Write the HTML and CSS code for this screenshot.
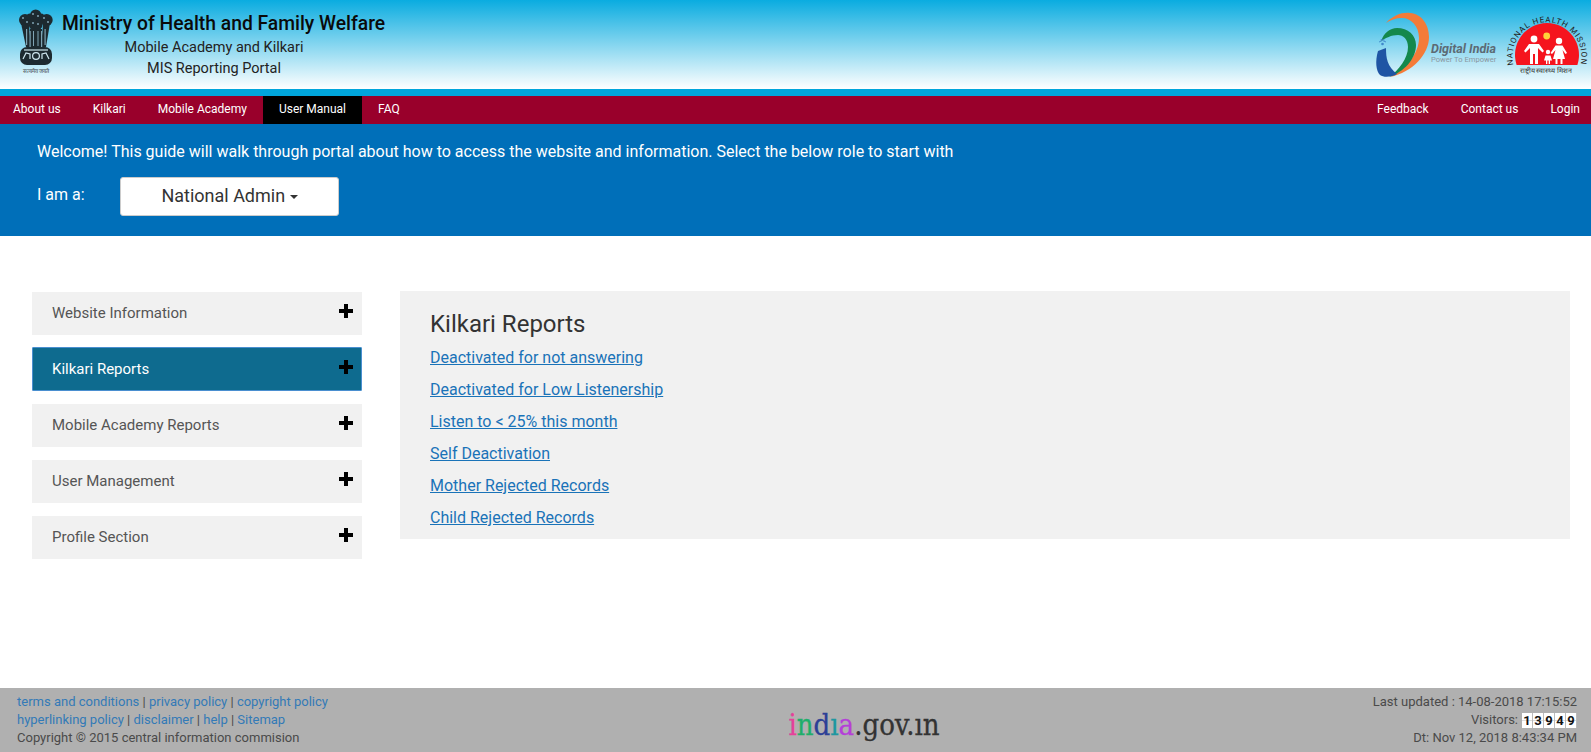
FILE: index.html
```html
<!DOCTYPE html>
<html lang="en">
<head>
  <meta charset="UTF-8" />
  <meta name="viewport" content="width=device-width, initial-scale=1.0"/>
  <title>Mobile Academy and Kilkari - MIS Reporting Portal</title>
  <link rel="stylesheet" href="styles.css">
</head>
<body>
  <header class="banner">
    <div class="brand">
      <svg class="emblem" viewBox="0 0 38 66" width="38" height="66">
        <g fill="#1d2a30">
          <circle cx="18.7" cy="6" r="5.5"/>
          <circle cx="8" cy="11" r="6"/>
          <circle cx="29.7" cy="11" r="6"/>
          <circle cx="13" cy="8" r="3.5"/>
          <circle cx="24" cy="8" r="3.5"/>
          <ellipse cx="18.7" cy="15" rx="7" ry="7"/>
          <path d="M4 14 L12 16 L14 38 L9 38 Z"/>
          <path d="M33 14 L26 16 L24 38 L29 38 Z"/>
          <path d="M13 20 H25 L25 38 H13 Z"/>
          <rect x="3" y="38" width="32" height="18" rx="7"/>
        </g>
        <g fill="#7fa3b3">
          <rect x="9" y="20" width="1.2" height="16"/>
          <rect x="12.5" y="22" width="1.2" height="16"/>
          <rect x="16" y="22" width="1" height="15"/>
          <rect x="20.5" y="22" width="1" height="15"/>
          <rect x="24" y="22" width="1.2" height="16"/>
          <rect x="27.5" y="20" width="1.2" height="16"/>
          <circle cx="6" cy="9" r="1"/>
          <circle cx="10" cy="13" r="1"/>
          <circle cx="16" cy="5" r="1"/>
          <circle cx="21" cy="7" r="1"/>
          <circle cx="27" cy="9" r="1"/>
          <circle cx="31" cy="13" r="1"/>
          <circle cx="16" cy="14" r="1"/>
          <circle cx="21" cy="15" r="1"/>
        </g>
        <g fill="none" stroke="#cfe6ef" stroke-width="1.2">
          <circle cx="19" cy="47" r="3.4"/>
          <path d="M6 50 L9 44 L13 45 L13 50"/>
          <path d="M25 50 L25 45 L29 44 L32 50"/>
          <path d="M7 41 H31"/>
        </g>
        <text class="emblem-motto" x="19" y="63.5" text-anchor="middle">सत्यमेव जयते</text>
      </svg>
      <div class="brand-text">
        <h1>Ministry of Health and Family Welfare</h1>
        <p class="line-one">Mobile Academy and Kilkari</p>
        <p class="line-two">MIS Reporting Portal</p>
      </div>
    </div>
    <div class="logos">
      <div class="digital">
        <svg viewBox="0 0 56 66" width="56" height="66">
          <path d="M11 11 C18 3 28 0 35 1 C47 2 54 13 54 25 C54 42 38 60 15 65 C30 58 44 42 44 26 C44 14 36 6 27 6 C21 6 15 8 11 11 Z" fill="#f47b38"/>
          <path d="M6 29 C9 21 15 16 22 16 C33 16 41 23 41 33 C41 47 29 60 14 65 C24 58 33 46 33 35 C33 27 28 23 23 23 C16 23 11 26 6 29 Z" fill="#14884c"/>
          <path d="M3 39 L11 36 C11 46 12 54 22 62 C17 65 9 66 5 63 C1 59 0 49 3 39 Z" fill="#1f55a4"/>
          <circle cx="7.5" cy="32" r="1.3" fill="#3f87c9"/>
          <path d="M4 30 Q7.5 27 11 30 M5.5 28 Q7.5 26.5 9.5 28" fill="none" stroke="#3f87c9" stroke-width=".9"/>
        </svg>
        <div class="digital-text">
          <span class="digital-name">Digital India</span>
          <span class="digital-tag">Power To Empower</span>
        </div>
      </div>
      <svg class="nhm" viewBox="0 0 84 72" width="84" height="72">
        <defs>
          <path id="nhmArc" d="M8.5 60 A34.5 34.5 0 1 1 75.5 60"/>
        </defs>
        <text class="nhm-arc"><textPath href="#nhmArc" startOffset="50%" text-anchor="middle">NATIONAL HEALTH MISSION</textPath></text>
        <path d="M11.6 60 A32 32 0 1 1 72.4 60 Z" fill="#f5141e"/>
        <circle cx="41.7" cy="31" r="3.4" fill="#ffd23a"/>
        <g fill="#fff">
          <circle cx="29" cy="34" r="3.4"/>
          <path d="M24 39 H34 L39 46 L37.5 47.5 L33 43 V59 H30 V49 H28 V59 H25 V43 L20.5 47.5 L19 46 Z"/>
          <circle cx="54" cy="36" r="3.2"/>
          <path d="M50.5 40.5 H57.5 L62 48 L60.5 49 L57.5 45 L60 54 H57.5 V59 H55.5 V54 H52.5 V59 H50.5 V54 H48 L50.5 45 L47 49 L45.5 48 Z"/>
          <circle cx="43" cy="47" r="2.2"/>
          <path d="M40.5 50.5 H45.5 L47 55.5 H45 V59 H43.7 V55.5 H42.3 V59 H41 V55.5 H39 Z"/>
        </g>
        <text class="nhm-hindi" x="41" y="68" text-anchor="middle">राष्ट्रीय स्वास्थ्य मिशन</text>
      </svg>
    </div>
  </header>

  <nav class="topnav">
    <ul class="nav-left">
      <li><a href="#">About us</a></li>
      <li><a href="#">Kilkari</a></li>
      <li><a href="#">Mobile Academy</a></li>
      <li class="current"><a href="#">User Manual</a></li>
      <li><a href="#">FAQ</a></li>
    </ul>
    <ul class="nav-right">
      <li><a href="#">Feedback</a></li>
      <li><a href="#">Contact us</a></li>
      <li><a href="#">Login</a></li>
    </ul>
  </nav>

  <section class="intro">
    <p>Welcome! This guide will walk through portal about how to access the website and information. Select the below role to start with</p>
    <div class="role-row">
      <span class="role-label">I am a:</span>
      <button class="role-btn" type="button">National Admin <span class="caret"></span></button>
    </div>
  </section>

  <main class="guide">
    <aside class="side">
      <div class="side-item"><span>Website Information</span><b class="plus"></b></div>
      <div class="side-item active"><span>Kilkari Reports</span><b class="plus"></b></div>
      <div class="side-item"><span>Mobile Academy Reports</span><b class="plus"></b></div>
      <div class="side-item"><span>User Management</span><b class="plus"></b></div>
      <div class="side-item"><span>Profile Section</span><b class="plus"></b></div>
    </aside>
    <section class="panel">
      <h2>Kilkari Reports</h2>
      <ul>
        <li><a href="#">Deactivated for not answering</a></li>
        <li><a href="#">Deactivated for Low Listenership</a></li>
        <li><a href="#">Listen to &lt; 25% this month</a></li>
        <li><a href="#">Self Deactivation</a></li>
        <li><a href="#">Mother Rejected Records</a></li>
        <li><a href="#">Child Rejected Records</a></li>
      </ul>
    </section>
  </main>

  <footer class="foot">
    <div class="foot-left">
      <div><a href="#">terms and conditions</a> | <a href="#">privacy policy</a> | <a href="#">copyright policy</a></div>
      <div><a href="#">hyperlinking policy</a> | <a href="#">disclaimer</a> | <a href="#">help</a> | <a href="#">Sitemap</a></div>
      <div>Copyright © 2015 central information commision</div>
    </div>
    <div class="foot-logo"><span class="c-pink">i</span><span class="c-green">n</span><span class="c-blue">d</span><span class="c-teal">ı</span><span class="c-purple">a</span><span class="c-grey">.gov.ın</span></div>
    <div class="foot-right">
      <div>Last updated : 14-08-2018 17:15:52</div>
      <div class="visitors">Visitors:
        <span class="counter"><i>1</i><i>3</i><i>9</i><i>4</i><i>9</i></span>
      </div>
      <div>Dt: Nov 12, 2018 8:43:34 PM</div>
    </div>
  </footer>
</body>
</html>
```

FILE: styles.css
```css
* {
  box-sizing: border-box;
}
html, body {
  height: 100%;
}
body {
  margin: 0;
  min-height: 752px;
  display: flex;
  flex-direction: column;
  font-family: Roboto, "Liberation Sans", sans-serif;
  font-size: 14px;
  color: #333;
  background: #fff;
}
ul {
  list-style: none;
  margin: 0;
  padding: 0;
}
p, h1, h2 {
  margin: 0;
}

/* banner */
.banner {
  height: 96px;
  display: flex;
  justify-content: space-between;
  background: linear-gradient(#0aace0, #ffffff 89px);
  border-bottom: 7px solid #00a6dc;
}
.brand {
  display: flex;
  padding: 9px 0 0 17px;
}
.emblem {
  display: block;
}
.emblem-motto {
  font-size: 5.6px;
  fill: #3c474c;
}
.brand-text {
  width: 324px;
  margin-left: 7px;
  text-align: center;
  color: #111;
}
.brand-text h1 {
  font-size: 19.3px;
  font-weight: 500;
  line-height: 24px;
  white-space: nowrap;
  text-align: left;
  margin-top: 3px;
  color: #0a0a0a;
}
.line-one, .line-two {
  font-size: 14.5px;
  line-height: 20px;
  padding-right: 20px;
  color: #222;
}
.line-one {
  margin-top: 2px;
}
.line-two {
  margin-top: 1px;
}
.logos {
  display: flex;
  align-items: flex-start;
}
.digital {
  display: flex;
  padding-top: 12px;
}
.digital-text {
  width: 68px;
  margin: 30px 0 0 0;
}
.digital-name {
  display: block;
  font-size: 12.5px;
  line-height: 13px;
  font-weight: 700;
  font-style: italic;
  color: #5c6a74;
  white-space: nowrap;
}
.digital-tag {
  display: block;
  font-size: 7.6px;
  line-height: 9px;
  color: #8b979e;
  white-space: nowrap;
}
.nhm {
  margin: 5px 2px 0 6px;
}
.nhm-arc {
  font-size: 8px;
  letter-spacing: .9px;
  fill: #222;
}
.nhm-hindi {
  font-size: 7px;
  fill: #333;
}

/* nav */
.topnav {
  height: 28px;
  display: flex;
  justify-content: space-between;
  background: #99002b;
}
.nav-left, .nav-right {
  display: flex;
}
.topnav a {
  display: block;
  line-height: 26px;
  padding: 0 16px;
  font-size: 12px;
  color: #fff;
  text-decoration: none;
}
.nav-left li:first-child a {
  padding-left: 13px;
}
.nav-right li:last-child a {
  padding-right: 11px;
}
.nav-left li.current a {
  background: #000;
  height: 28px;
}

/* welcome strip */
.intro {
  height: 112px;
  padding: 18px 37px 0;
  background: #006fb9;
  color: #fff;
  font-size: 16px;
}
.intro p {
  line-height: 20px;
}
.role-row {
  display: flex;
  align-items: center;
  margin-top: 15px;
}
.role-label {
  width: 83px;
  padding-bottom: 4px;
}
.role-btn {
  width: 219px;
  height: 39px;
  padding: 0 0 2px;
  background: #fff;
  border: 1px solid #ccc;
  border-radius: 3px;
  font-family: inherit;
  font-size: 18px;
  color: #333;
}
.caret {
  display: inline-block;
  vertical-align: middle;
  border-top: 4px solid #333;
  border-left: 4px solid transparent;
  border-right: 4px solid transparent;
}

/* guide */
.guide {
  display: flex;
  align-items: flex-start;
  padding: 55px 21px 0 32px;
}
.side {
  width: 330px;
  padding-top: 1px;
  display: flex;
  flex-direction: column;
  gap: 13px;
}
.side-item {
  height: 43px;
  display: flex;
  align-items: center;
  justify-content: space-between;
  padding: 0 9px 2px 20px;
  background: #f1f1f1;
  font-size: 15px;
  color: #555;
}
.side-item.active {
  height: 44px;
  margin-top: -1px;
  background: #0e6b8f;
  border: 1px solid #4a8fd0;
  border-radius: 1px;
  color: #fff;
  padding: 0 8px 1px 19px;
}
.plus {
  width: 14px;
  height: 14px;
  margin-bottom: 4px;
  background: linear-gradient(#000, #000) center / 14px 4px no-repeat,
              linear-gradient(#000, #000) center / 4px 14px no-repeat;
}
.panel {
  flex: 1;
  height: 248px;
  margin-left: 38px;
  padding: 18px 30px 0;
  background: #f1f1f1;
}
.panel h2 {
  font-size: 24px;
  font-weight: 400;
  line-height: 30px;
  margin-bottom: 6px;
}
.panel li {
  height: 32px;
  font-size: 16px;
  line-height: 26px;
}
.panel a {
  color: #1a73b8;
}

/* footer */
.foot {
  margin-top: auto;
  height: 64px;
  display: flex;
  justify-content: space-between;
  align-items: flex-start;
  padding: 5px 14px 0 17px;
  background: #b0b0b0;
  font-size: 13px;
  line-height: 18px;
  color: #4a4a4a;
}
.foot a {
  color: #337ab7;
  text-decoration: none;
}
.foot-left {
  width: 500px;
}
.foot-logo {
  font-family: "DejaVu Serif Condensed", "DejaVu Serif", serif;
  font-size: 29px;
  line-height: 36px;
  margin-top: 14px;
  margin-left: 134px;
  white-space: nowrap;
  -webkit-text-stroke: .3px;
}
.c-pink { color: #e5409a; }
.c-green { color: #1fae6a; }
.c-blue { color: #2c3f96; }
.c-teal { color: #1e97a0; }
.c-purple { color: #b53fd8; }
.c-grey { color: #333; }
.foot-right {
  width: 500px;
  text-align: right;
}
.visitors {
  display: flex;
  justify-content: flex-end;
  gap: 4px;
}
.counter {
  display: flex;
  height: 15px;
  margin-top: 2px;
  background: #fff;
}
.counter i {
  width: 11px;
  text-align: center;
  font-style: normal;
  font-weight: 700;
  font-size: 13px;
  line-height: 15px;
  color: #111;
  background: linear-gradient(#fff 45%, #ddd 50%, #fff 55%);
  border-right: 1px solid #bbb;
}
```
